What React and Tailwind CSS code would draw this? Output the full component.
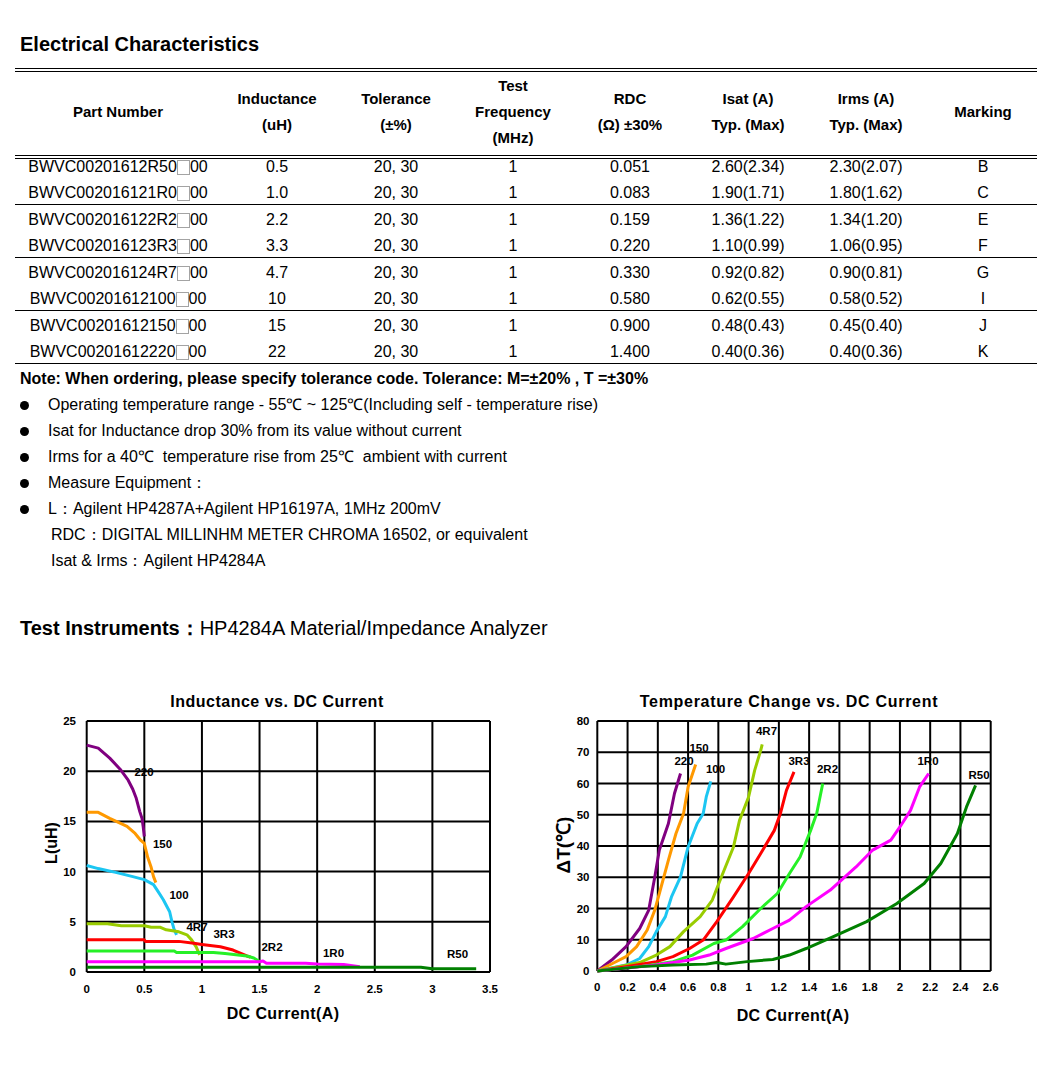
import React from 'react'

const cols = "grid grid-cols-[206px_112px_126px_108px_126px_110px_126px_108px]"

const rows = [
  ["BWVC00201612R50", "0.5", "0.051", "2.60(2.34)", "2.30(2.07)", "B"],
  ["BWVC002016121R0", "1.0", "0.083", "1.90(1.71)", "1.80(1.62)", "C"],
  ["BWVC002016122R2", "2.2", "0.159", "1.36(1.22)", "1.34(1.20)", "E"],
  ["BWVC002016123R3", "3.3", "0.220", "1.10(0.99)", "1.06(0.95)", "F"],
  ["BWVC002016124R7", "4.7", "0.330", "0.92(0.82)", "0.90(0.81)", "G"],
  ["BWVC00201612100", "10", "0.580", "0.62(0.55)", "0.58(0.52)", "I"],
  ["BWVC00201612150", "15", "0.900", "0.48(0.43)", "0.45(0.40)", "J"],
  ["BWVC00201612220", "22", "1.400", "0.40(0.36)", "0.40(0.36)", "K"],
]

const Row = ({ r, h }) => (
  <div className={`${cols} ${h} leading-[16px] text-center`}>
    <div>
      {r[0]}
      <span className="inline-block w-[13px] h-[15px] border border-[#a3a3a3] align-[-3px]"></span>
      00
    </div>
    <div>{r[1]}</div>
    <div>20, 30</div>
    <div>1</div>
    <div>{r[2]}</div>
    <div>{r[3]}</div>
    <div>{r[4]}</div>
    <div>{r[5]}</div>
  </div>
)

const Pair = ({ a, b, first }) => (
  <div className={`border-b border-black ${first ? "" : "pt-[7px]"}`}>
    <Row r={a} h="h-[26px]" />
    <Row r={b} h="h-[19px]" />
  </div>
)

const Bullet = ({ children }) => (
  <div className="flex items-center h-[26px]">
    <span className="ml-[20px] w-[9px] h-[9px] rounded-full bg-black"></span>
    <span className="ml-[19px]">{children}</span>
  </div>
)

// ---- charts ----
const leftChart = {
  w: 530, dx: 0,
  x0: 86.7, x1: 490, y0: 41, y1: 292,
  xMax: 3.5, yMax: 25,
  xTicks: ["0", "0.5", "1", "1.5", "2", "2.5", "3", "3.5"],
  yTicks: ["0", "5", "10", "15", "20", "25"],
  yTickX: 76, xTickY: 309,
  title: "Inductance vs. DC Current", titleX: 277, titleSpacing: 0.5,
  yLabel: "L(uH)", yLabelX: 51, yLabelY: 163, yLabelSize: 16,
  xLabelX: 283, xLabelY: 333,
  curves: [
    ["#800080", [[0, 22.6], [0.1, 22.3], [0.2, 21.3], [0.29, 20.2], [0.36, 19.1], [0.4, 18.2], [0.43, 17.3], [0.46, 16], [0.48, 15.3], [0.49, 14.5], [0.5, 13.5]]],
    ["#FF9900", [[0, 15.9], [0.1, 15.9], [0.2, 15.3], [0.35, 14.5], [0.42, 13.8], [0.47, 13.1], [0.5, 12.8], [0.53, 11.4], [0.56, 10.4], [0.58, 9.5], [0.6, 8.9]]],
    ["#1CC6F2", [[0, 10.6], [0.1, 10.3], [0.26, 9.9], [0.4, 9.5], [0.5, 9.2], [0.58, 8.7], [0.62, 8.0], [0.665, 7.2], [0.72, 6.0], [0.74, 5.0], [0.76, 4.2], [0.78, 3.7]]],
    ["#99CC00", [[0, 4.8], [0.18, 4.8], [0.3, 4.6], [0.5, 4.6], [0.56, 4.45], [0.64, 4.45], [0.69, 4.2], [0.8, 4.0], [0.87, 3.7], [0.91, 3.2], [0.95, 2.5], [0.98, 1.7]]],
    ["#FF0000", [[0, 3.2], [0.5, 3.2], [0.51, 3.05], [0.8, 3.05], [0.93, 2.86], [1.0, 2.75], [1.16, 2.52], [1.27, 2.19], [1.39, 1.6], [1.42, 1.5]]],
    ["#26F026", [[0, 2.1], [0.76, 2.1], [0.78, 1.95], [1.1, 1.95], [1.2, 1.85], [1.39, 1.6], [1.45, 1.4], [1.5, 1.05]]],
    ["#FF00FF", [[0, 1.03], [1.5, 1.03], [1.53, 1.1], [1.56, 0.87], [1.9, 0.87], [2.0, 0.8], [2.23, 0.75], [2.37, 0.53]]],
    ["#008000", [[0, 0.47], [2.9, 0.47], [3.0, 0.33], [3.38, 0.33]]],
  ],
  labels: [["220", 144, 772], ["150", 162.5, 844], ["100", 179, 895], ["4R7", 197, 927], ["3R3", 224, 934], ["2R2", 272, 947], ["1R0", 333.5, 953], ["R50", 457.5, 954]],
}

const rightChart = {
  w: 529, dx: 530,
  x0: 67.3, x1: 460.7, y0: 41, y1: 291,
  xMax: 2.6, yMax: 80,
  xTicks: ["0", "0.2", "0.4", "0.6", "0.8", "1", "1.2", "1.4", "1.6", "1.8", "2", "2.2", "2.4", "2.6"],
  yTicks: ["0", "10", "20", "30", "40", "50", "60", "70", "80"],
  yTickX: 59.5, xTickY: 307,
  title: "Temperature Change vs. DC Current", titleX: 259, titleSpacing: 0.7,
  yLabel: "ΔT(℃)", yLabelX: 33, yLabelY: 165, yLabelSize: 19,
  xLabelX: 263, xLabelY: 335,
  curves: [
    ["#800080", [[0, 0], [0.095, 3.5], [0.19, 7.8], [0.28, 13.6], [0.34, 19.5], [0.38, 30.1], [0.41, 38.7], [0.47, 47.2], [0.51, 56.8], [0.55, 63.2]]],
    ["#FF9900", [[0, 0], [0.1, 2.4], [0.19, 4.6], [0.26, 7.8], [0.33, 13.1], [0.38, 19.5], [0.41, 24.8], [0.47, 35.5], [0.52, 44], [0.57, 50.4], [0.6, 58.9], [0.65, 66.1]]],
    ["#1CC6F2", [[0, 0], [0.19, 1.9], [0.28, 4], [0.34, 7.8], [0.39, 12.6], [0.45, 17.4], [0.49, 23.7], [0.55, 30.1], [0.6, 39.7], [0.66, 47.2], [0.7, 50.4], [0.72, 55.7], [0.75, 60.7]]],
    ["#99CC00", [[0, 0], [0.28, 2.7], [0.39, 5.1], [0.48, 7.8], [0.57, 12.6], [0.68, 17.4], [0.76, 22.7], [0.82, 30.1], [0.9, 39.7], [0.94, 48.2], [1.0, 55.7], [1.04, 64.2], [1.08, 70.6], [1.09, 72.5]]],
    ["#FF0000", [[0, 0], [0.19, 1.4], [0.39, 3], [0.5, 4.6], [0.61, 7.2], [0.7, 9.9], [0.79, 15.8], [0.9, 23.7], [1.0, 31.2], [1.08, 37.6], [1.17, 45], [1.21, 50.4], [1.25, 57.8], [1.3, 63.7]]],
    ["#26F026", [[0, 0], [0.28, 1.4], [0.5, 3], [0.63, 5.1], [0.77, 8.8], [0.85, 9.9], [0.96, 14.2], [1.08, 20], [1.19, 24.8], [1.27, 31.2], [1.34, 36.5], [1.41, 45], [1.45, 50.4], [1.49, 60]]],
    ["#FF00FF", [[0, 0], [0.39, 1.9], [0.61, 3.5], [0.74, 5.1], [0.85, 7.2], [0.94, 8.8], [1.03, 10.4], [1.16, 13.6], [1.27, 16.3], [1.38, 20.6], [1.54, 25.9], [1.71, 33.3], [1.82, 38.7], [1.94, 41.9], [2.0, 46.1], [2.07, 51.4], [2.13, 58.9], [2.19, 63.2]]],
    ["#008000", [[0, 0], [0.28, 1.4], [0.5, 1.9], [0.72, 2.2], [0.79, 2.7], [0.85, 2.2], [0.99, 3.0], [1.16, 3.7], [1.27, 5.1], [1.38, 7.2], [1.56, 11], [1.78, 15.8], [1.98, 21.6], [2.16, 28], [2.27, 34.4], [2.38, 44], [2.44, 52.5], [2.5, 59.4]]],
  ],
  labels: [["4R7", 766.5, 731], ["150", 699, 748], ["220", 684, 761], ["100", 715.5, 769], ["3R3", 799, 761], ["2R2", 827.5, 769], ["1R0", 928, 761], ["R50", 979, 775]],
}

const Chart = ({ c }) => {
  const sx = v => c.x0 + (v / c.xMax) * (c.x1 - c.x0)
  const sy = v => c.y1 - (v / c.yMax) * (c.y1 - c.y0)
  const font = "'Liberation Sans', Arial, sans-serif"
  return (
    <svg width={c.w} height={360} className="block shrink-0" fontFamily={font} fontWeight="bold">
      <text x={c.titleX} y={21} textAnchor="middle" dominantBaseline="central" fontSize="16" letterSpacing={c.titleSpacing}>{c.title}</text>
      {c.xTicks.map(t => (
        <line key={"gx" + t} x1={sx(+t)} x2={sx(+t)} y1={c.y0} y2={c.y1} stroke="#000" strokeWidth="2" />
      ))}
      {c.yTicks.map(t => (
        <line key={"gy" + t} x1={c.x0} x2={c.x1} y1={sy(+t)} y2={sy(+t)} stroke="#000" strokeWidth="2" />
      ))}
      {c.xTicks.map(t => (
        <text key={"tx" + t} x={sx(+t)} y={c.xTickY} textAnchor="middle" dominantBaseline="central" fontSize="11.5">{t}</text>
      ))}
      {c.yTicks.map(t => (
        <text key={"ty" + t} x={c.yTickX} y={sy(+t)} textAnchor="end" dominantBaseline="central" fontSize="11.5">{t}</text>
      ))}
      {c.curves.map(([col, d], i) => (
        <polyline key={i} points={d.map(p => `${sx(p[0])},${sy(p[1])}`).join(" ")} fill="none" stroke={col} strokeWidth="3" strokeLinejoin="round" />
      ))}
      {c.labels.map(([t, x, y]) => (
        <text key={"l" + t} x={x - c.dx} y={y - 680} textAnchor="middle" dominantBaseline="central" fontSize="11.5">{t}</text>
      ))}
      <text x={c.yLabelX} y={c.yLabelY} textAnchor="middle" dominantBaseline="central" fontSize={c.yLabelSize} transform={`rotate(-90 ${c.yLabelX} ${c.yLabelY})`}>{c.yLabel}</text>
      <text x={c.xLabelX} y={c.xLabelY} textAnchor="middle" dominantBaseline="central" fontSize="16" letterSpacing="0.4">DC Current(A)</text>
    </svg>
  )
}

export default function App() {
  return (
    <div className="w-[1059px] h-[1072px] bg-white text-black font-['Liberation_Sans',Arial,sans-serif] overflow-hidden">
      <h1 className="pl-[20px] pt-[32px] text-[20px] font-bold leading-[24px]">Electrical Characteristics</h1>

      <div className="ml-[15px] w-[1022px] mt-[12px] text-[16px]">
        <div className={`${cols} border-y-4 border-double border-black h-[91px] pb-[3px] items-center text-center text-[15px] font-bold leading-[26px]`}>
          <div>Part Number</div>
          <div>Inductance<br />(uH)</div>
          <div>Tolerance<br />(±%)</div>
          <div>Test<br />Frequency<br />(MHz)</div>
          <div>RDC<br />(Ω) ±30%</div>
          <div>Isat (A)<br />Typ. (Max)</div>
          <div>Irms (A)<br />Typ. (Max)</div>
          <div>Marking</div>
        </div>
        <Pair a={rows[0]} b={rows[1]} first />
        <Pair a={rows[2]} b={rows[3]} />
        <Pair a={rows[4]} b={rows[5]} />
        <Pair a={rows[6]} b={rows[7]} />
      </div>

      <div className="mt-[2px] text-[16px] leading-[26px]">
        <div className="pl-[20px] font-bold h-[26px]">Note: When ordering, please specify tolerance code. Tolerance: M=±20% , T =±30%</div>
        <Bullet>Operating temperature range - 55℃ ~ 125℃(Including self - temperature rise)</Bullet>
        <Bullet>Isat for Inductance drop 30% from its value without current</Bullet>
        <Bullet>Irms for a 40℃&nbsp; temperature rise from 25℃&nbsp; ambient with current</Bullet>
        <Bullet>Measure Equipment：</Bullet>
        <Bullet>L：Agilent HP4287A+Agilent HP16197A, 1MHz 200mV</Bullet>
        <div className="pl-[51px] h-[26px]">RDC：DIGITAL MILLINHM METER CHROMA 16502, or equivalent</div>
        <div className="pl-[51px] h-[26px]">Isat &amp; Irms：Agilent HP4284A</div>
      </div>

      <div className="pl-[20px] mt-[41px] text-[20px] leading-[26px]">
        <span className="font-bold">Test Instruments：</span>HP4284A Material/Impedance Analyzer
      </div>

      <div className="flex mt-[39px]">
        <Chart c={leftChart} />
        <Chart c={rightChart} />
      </div>
    </div>
  )
}
